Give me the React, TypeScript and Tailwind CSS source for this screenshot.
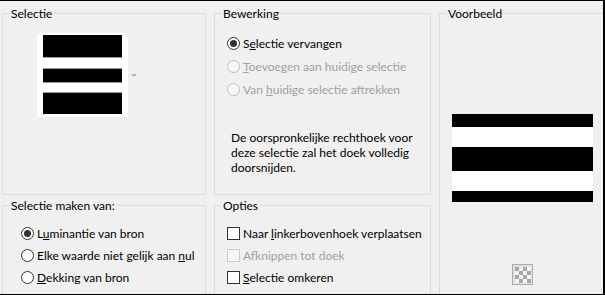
import type { ReactNode } from "react";

const Radio = ({ checked, disabled }: { checked?: boolean; disabled?: boolean }) => (
  <span
    className={`flex items-center justify-center w-[13px] h-[13px] rounded-full border shrink-0 ${
      disabled ? "border-[#bcbcbc] bg-[#f7f7f7]" : "border-[#333333] bg-white"
    }`}
  >
    {checked && <span className="w-[7px] h-[7px] rounded-full bg-[#333333]" />}
  </span>
);

const Check = ({ disabled }: { disabled?: boolean }) => (
  <span
    className={`w-[13px] h-[13px] border shrink-0 ${
      disabled ? "border-[#cccccc] bg-[#f7f7f7]" : "border-[#333333] bg-white"
    }`}
  />
);

const Row = ({ control, children, disabled }: { control: ReactNode; children: ReactNode; disabled?: boolean }) => (
  <div className={`flex items-center h-[22px] ${disabled ? "text-[#a0a0a0]" : "text-black"}`}>
    {control}
    <span className="ml-[3px] whitespace-nowrap">{children}</span>
  </div>
);

const Group = ({ title, className, children }: { title: string; className?: string; children: ReactNode }) => (
  <fieldset className={`border border-[#dcdcdc] min-w-0 ${className ?? ""}`}>
    <legend className="ml-[6px] px-[2px] leading-[15px] text-black">{title}</legend>
    {children}
  </fieldset>
);

export default function App() {
  return (
    <div className="w-[605px] h-[295px] overflow-hidden bg-[#f0f0f0] border-t border-b border-r-2 border-black font-['Lato','Liberation_Sans',sans-serif] text-[12px] leading-[15px]">
      <div className="grid grid-cols-[204px_217px_200px] grid-rows-[189px_120px] gap-x-2 gap-y-[3px] pl-[2px] pt-[5px]">
        {/* Selectie */}
        <Group title="Selectie">
          <div className="flex items-center ml-[34px] mt-[12px]">
            <div className="w-[91px] h-[84px] bg-white px-[6px] pt-[2px]">
              <div className="h-[22px] bg-black border-b border-[#9a9a9a] box-content" />
              <div className="h-[13px] bg-black border-y border-[#9a9a9a] box-content mt-[10px]" />
              <div className="h-[21px] bg-black border-t border-[#9a9a9a] box-content mt-[9px]" />
            </div>
            <span className="ml-[3px] mt-[1px] w-0 h-0 border-x-[3px] border-x-transparent border-t-[3px] border-t-[#b4b4b4]" />
          </div>
        </Group>

        {/* Bewerking */}
        <Group title="Bewerking">
          <div className="pl-[12px] mt-[11px] flex flex-col gap-px">
            <Row control={<Radio checked />}>
              S<u>e</u>lectie vervangen
            </Row>
            <Row control={<Radio disabled />} disabled>
              <u>T</u>oevoegen aan huidige selectie
            </Row>
            <Row control={<Radio disabled />} disabled>
              Van <u>h</u>uidige selectie aftrekken
            </Row>
          </div>
          <p className="pl-[16px] mt-[30px] text-black">
            De oorspronkelijke rechthoek voor
            <br />
            deze selectie zal het doek volledig
            <br />
            doorsnijden.
          </p>
        </Group>

        {/* Voorbeeld */}
        <Group title="Voorbeeld" className="row-span-2">
          <div className="ml-[12px] mt-[93px] w-[141px] flex flex-col">
            <div className="h-[13px] bg-black" />
            <div className="h-[20px] bg-white" />
            <div className="h-[24px] bg-black" />
            <div className="h-[20px] bg-white" />
            <div className="h-[11px] bg-black" />
          </div>
          <div className="ml-[72px] mt-[62px] w-[21px] h-[21px] border border-[#adadad] bg-[#e1e1e1] flex items-center justify-center">
            <svg width="16" height="16" viewBox="0 0 16 16">
              <rect width="16" height="16" fill="#f4f4f4" />
              <rect x="0" y="0" width="4" height="4" fill="#a8a8a8" />
              <rect x="8" y="0" width="4" height="4" fill="#a8a8a8" />
              <rect x="4" y="4" width="4" height="4" fill="#a8a8a8" />
              <rect x="12" y="4" width="4" height="4" fill="#a8a8a8" />
              <rect x="0" y="8" width="4" height="4" fill="#a8a8a8" />
              <rect x="8" y="8" width="4" height="4" fill="#a8a8a8" />
              <rect x="4" y="12" width="4" height="4" fill="#a8a8a8" />
              <rect x="12" y="12" width="4" height="4" fill="#a8a8a8" />
            </svg>
          </div>
        </Group>

        {/* Selectie maken van */}
        <Group title="Selectie maken van:">
          <div className="pl-[18px] mt-[9px]">
            <Row control={<Radio checked />}>
              L<u>u</u>minantie van bron
            </Row>
            <Row control={<Radio />}>
              Elke waarde niet gelijk aan <u>n</u>ul
            </Row>
            <Row control={<Radio />}>
              <u>D</u>ekking van bron
            </Row>
          </div>
        </Group>

        {/* Opties */}
        <Group title="Opties">
          <div className="pl-[12px] mt-[9px]">
            <Row control={<Check />}>
              Naar <u>l</u>inkerbovenhoek verplaatsen
            </Row>
            <Row control={<Check disabled />} disabled>
              Af<u>k</u>nippen tot doek
            </Row>
            <Row control={<Check />}>
              <u>S</u>electie omkeren
            </Row>
          </div>
        </Group>
      </div>
    </div>
  );
}
